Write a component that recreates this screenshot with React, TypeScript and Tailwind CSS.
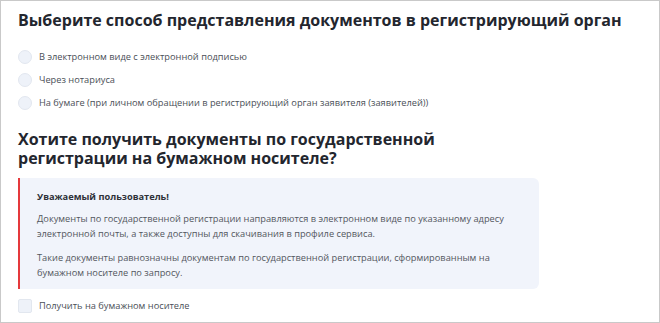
export default function App() {
  const options = [
    "В электронном виде с электронной подписью",
    "Через нотариуса",
    "На бумаге (при личном обращении в регистрирующий орган заявителя (заявителей))",
  ];
  return (
    <div
      className="w-[660px] h-[323px] overflow-hidden border border-[#c9c9c9] bg-white text-[#333840]"
      style={{ fontFamily: '"Open Sans", "Liberation Sans", sans-serif' }}
    >
      <div className="pl-[17px] pr-4 pt-[7px]">
        <h1 className="text-[16px] leading-[24px] font-bold text-[#23262e]">
          Выберите способ представления документов в регистрирующий орган
        </h1>

        <div className="mt-[18px] flex flex-col gap-[9px]">
          {options.map((o) => (
            <label key={o} className="flex items-center gap-[7px]">
              <span className="w-[14px] h-[14px] rounded-full bg-[#eef2f9] border border-[#e2e7ef] shrink-0" />
              <span className="text-[9.25px] leading-[14px] text-[#4a4f57]">{o}</span>
            </label>
          ))}
        </div>

        <h2 className="mt-[20px] text-[16px] leading-[19px] font-bold text-[#23262e]">
          Хотите получить документы по государственной
          <br />
          регистрации на бумажном носителе?
        </h2>

        <div className="mt-[10px] w-[521px] bg-[#f1f4fb] border-l-2 border-[#e5393c] rounded-r-[6px] pl-[17px] pr-4 pt-[11px] pb-[9px]">
          <div className="text-[9.25px] leading-[15px] font-bold text-[#2e3138]">
            Уважаемый пользователь!
          </div>
          <p className="mt-[7px] text-[9.25px] leading-[15px] text-[#53575e]">
            Документы по государственной регистрации направляются в электронном виде по указанному адресу
            электронной почты, а также доступны для скачивания в профиле сервиса.
          </p>
          <p className="mt-[9px] text-[9.25px] leading-[15px] text-[#53575e]">
            Такие документы равнозначны документам по государственной регистрации, сформированным на
            бумажном носителе по запросу.
          </p>
        </div>

        <label className="mt-[10px] flex items-center gap-[7px]">
          <span className="w-[14px] h-[14px] rounded-[2px] bg-[#eef2f9] border border-[#e2e7ef] shrink-0" />
          <span className="text-[9.25px] leading-[14px] text-[#4a4f57]">Получить на бумажном носителе</span>
        </label>
      </div>
    </div>
  );
}
